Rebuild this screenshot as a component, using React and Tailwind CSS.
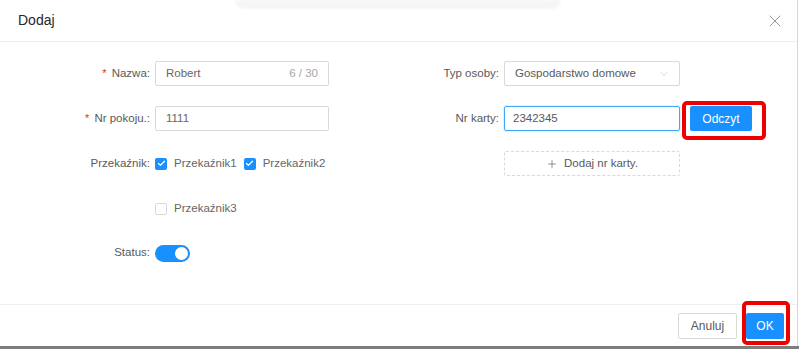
import { X, ChevronDown, Plus, Check } from 'lucide-react';

function Label({ text, required, width }) {
    return (
        <div className={`${width} shrink-0 flex justify-end items-center pr-[5px] text-[#595959]`}>
            {required && <span className="text-[#f5222d] mr-[5px] text-[11px] leading-none">*</span>}
            <span>{text}:</span>
        </div>
    );
}

function CheckItem({ label, checked }) {
    return (
        <label className="flex items-center mr-[7px]">
            <span
                className={`w-[12px] h-[12px] rounded-[2px] flex items-center justify-center ${checked ? 'bg-[#1890ff]' : 'border border-[#d9d9d9] bg-white'}`}
            >
                {checked && <Check size={9} strokeWidth={3.5} className="text-white" />}
            </span>
            <span className="ml-[7px] text-[#666]">{label}</span>
        </label>
    );
}

export default function App() {
    return (
        <div className="w-[799px] h-[349px] bg-white flex flex-col relative overflow-hidden text-[11.5px]" style={{ fontFamily: '"Liberation Sans", Arial, sans-serif' }}>
            {/* faint element peeking behind the modal */}
            <div className="absolute top-0 left-[235px] w-[326px] h-[9px] rounded-b-[12px] bg-[#f6f6f6] blur-[1px]" />

            <div className="w-[798px] h-[346px] flex flex-col border-r border-[#d6d6d6]">
                {/* Header */}
                <div className="h-[42px] shrink-0 flex items-center justify-between pl-[18px] pr-[12px] border-b border-[#efefef]">
                    <span className="text-[14px] text-[#262626]">Dodaj</span>
                    <X size={20} strokeWidth={1} className="text-[#808080]" />
                </div>

                {/* Body */}
                <div className="flex-1 pt-[9px] flex">
                    {/* Left column */}
                    <div className="w-[400px] shrink-0 flex flex-col">
                        <div className="h-[45px] flex items-center">
                            <Label text="Nazwa" required width="w-[155px]" />
                            <div className="w-[174px] h-[25px] border border-[#d9d9d9] rounded-[2px] flex items-center justify-between px-[10px]">
                                <span className="text-[#666]">Robert</span>
                                <span className="text-[#a6a6a6]">6 / 30</span>
                            </div>
                        </div>
                        <div className="h-[45px] flex items-center">
                            <Label text="Nr pokoju." required width="w-[155px]" />
                            <div className="w-[174px] h-[25px] border border-[#d9d9d9] rounded-[2px] flex items-center px-[10px]">
                                <span className="text-[#666]">1111</span>
                            </div>
                        </div>
                        <div className="h-[45px] flex items-center">
                            <Label text="Przekaźnik" width="w-[155px]" />
                            <CheckItem label="Przekaźnik1" checked />
                            <CheckItem label="Przekaźnik2" checked />
                        </div>
                        <div className="h-[45px] flex items-center">
                            <div className="w-[155px] shrink-0" />
                            <CheckItem label="Przekaźnik3" />
                        </div>
                        <div className="h-[44px] flex items-center">
                            <Label text="Status" width="w-[155px]" />
                            <div className="w-[35px] h-[17px] rounded-full bg-[#1890ff] flex items-center justify-end pr-[2px]">
                                <span className="w-[13px] h-[13px] rounded-full bg-white" />
                            </div>
                        </div>
                    </div>

                    {/* Right column */}
                    <div className="flex-1 flex flex-col">
                        <div className="h-[45px] flex items-center">
                            <Label text="Typ osoby" width="w-[104px]" />
                            <div className="w-[176px] h-[25px] border border-[#d9d9d9] rounded-[2px] flex items-center justify-between pl-[10px] pr-[9px]">
                                <span className="text-[#595959]">Gospodarstwo domowe</span>
                                <ChevronDown size={12} strokeWidth={1.2} className="text-[#bfbfbf]" />
                            </div>
                        </div>
                        <div className="h-[45px] flex items-center">
                            <Label text="Nr karty" width="w-[104px]" />
                            <div className="w-[176px] h-[25px] border border-[#40a9ff] rounded-[2px] flex items-center px-[8px] shadow-[0_0_0_1px_rgba(24,144,255,0.12)]">
                                <span className="text-[#595959]">2342345</span>
                            </div>
                            <div className="relative ml-[10px]">
                                <button className="w-[62px] h-[25px] rounded-[2px] bg-[#1890ff] text-white text-[12px]">Odczyt</button>
                                <div className="absolute -left-[8px] -right-[14px] -top-[5px] -bottom-[9px] border-[4px] border-[#ee0000] rounded-[5px]" />
                            </div>
                        </div>
                        <div className="h-[45px] flex items-center">
                            <div className="w-[104px] shrink-0" />
                            <div className="w-[176px] h-[25px] border border-dashed border-[#d9d9d9] rounded-[2px] flex items-center justify-center text-[#595959]">
                                <Plus size={12} strokeWidth={1.3} className="mr-[6px]" />
                                <span>Dodaj nr karty.</span>
                            </div>
                        </div>
                    </div>
                </div>

                {/* Footer */}
                <div className="h-[42px] shrink-0 border-t border-[#efefef] flex items-center justify-end pr-[13px]">
                    <button className="w-[59px] h-[26px] border border-[#d9d9d9] rounded-[2px] text-[#595959] text-[12px] bg-white">Anuluj</button>
                    <div className="relative ml-[9px]">
                        <button className="w-[38px] h-[26px] rounded-[2px] bg-[#1890ff] text-white text-[12px]">OK</button>
                        <div className="absolute -left-[4px] -right-[6px] -top-[12px] -bottom-[6px] border-[4px] border-[#ee0000] rounded-[5px]" />
                    </div>
                </div>
            </div>
            <div className="h-[3px] bg-[#7d7d7d]" />
        </div>
    );
}
